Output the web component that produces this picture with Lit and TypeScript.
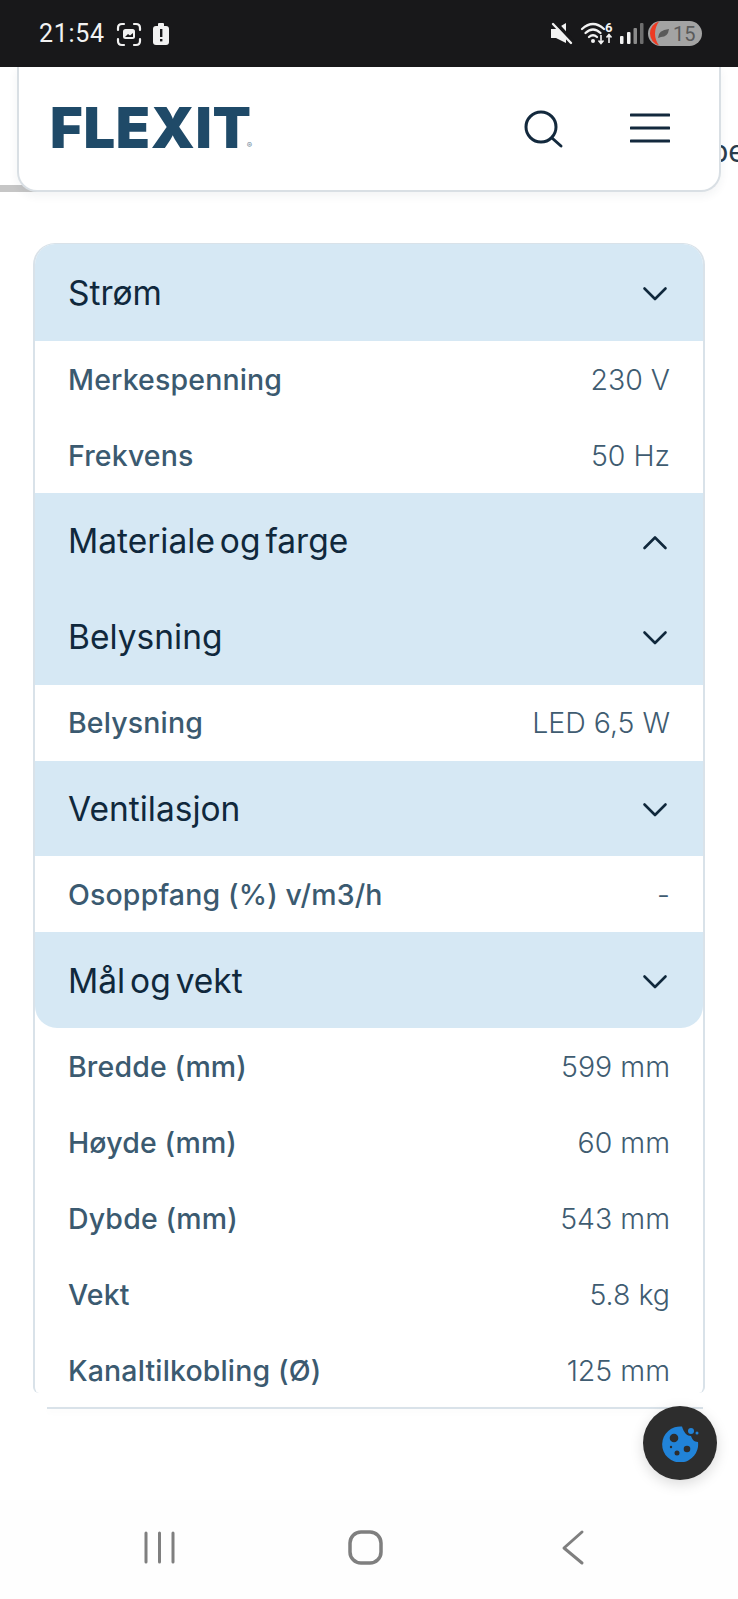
import { LitElement, css, html, svg } from "lit";
import { customElement } from "lit/decorators.js";

type Row = { label: string; value: string };
type Group = { title: string; open?: boolean; last?: boolean; rows: Row[] };

const groups: Group[] = [
  {
    title: "Strøm",
    rows: [
      { label: "Merkespenning", value: "230 V" },
      { label: "Frekvens", value: "50 Hz" },
    ],
  },
  { title: "Materiale og farge", open: true, rows: [] },
  { title: "Belysning", rows: [{ label: "Belysning", value: "LED 6,5 W" }] },
  { title: "Ventilasjon", rows: [{ label: "Osoppfang (%) v/m3/h", value: "-" }] },
  {
    title: "Mål og vekt",
    last: true,
    rows: [
      { label: "Bredde (mm)", value: "599 mm" },
      { label: "Høyde (mm)", value: "60 mm" },
      { label: "Dybde (mm)", value: "543 mm" },
      { label: "Vekt", value: "5.8 kg" },
      { label: "Kanaltilkobling (Ø)", value: "125 mm" },
    ],
  },
];

const chevron = (up?: boolean) => html`
  <svg class="chevron" viewBox="0 0 26 16" width="26" height="16">
    <path
      d=${up ? "M2.500 14L13 3.500L23.500 14" : "M2.500 2.500L13 13L23.500 2.500"}
      fill="none"
      stroke="#10283c"
      stroke-width="2.600"
      stroke-linecap="round"
      stroke-linejoin="round"
    />
  </svg>
`;

const statusLeft = svg`
  <g fill="none" stroke="#f2f2f2" stroke-width="2.200" stroke-linecap="round">
    <path d="M118 30V28Q118 24 122 24H124M134 24H136Q140 24 140 28V30M140 39V41Q140 45 136 45H134M124 45H122Q118 45 118 41V39" />
  </g>
  <rect x="123" y="29" width="12" height="10" rx="2.500" fill="#f2f2f2" />
  <path d="M125 37l3-3 2 1.500 3-2.500v4z" fill="#18181a" />
  <rect x="153" y="26" width="16" height="19" rx="3" fill="#f2f2f2" />
  <rect x="158" y="23" width="6" height="4" rx="1" fill="#f2f2f2" />
  <rect x="160" y="29" width="2.400" height="8" fill="#18181a" />
  <rect x="160" y="39" width="2.400" height="2.400" fill="#18181a" />
`;

const statusRight = svg`
  <path d="M551 29H556L566 23V43L556 38H551Z" fill="#f2f2f2" />
  <path d="M555 22L574 43" stroke="#18181a" stroke-width="4" />
  <path d="M553 24L571 43" stroke="#f2f2f2" stroke-width="2.400" stroke-linecap="round" />
  <g fill="none" stroke="#f2f2f2" stroke-width="2.300" stroke-linecap="round">
    <path d="M582 29Q593 19 604 29" />
    <path d="M585.500 33Q593 26 600.500 33" />
    <path d="M589 37Q593 33.500 597 37" />
  </g>
  <circle cx="593" cy="41" r="2" fill="#f2f2f2" />
  <text x="605" y="32" class="tiny">6</text>
  <path d="M601 35V43M598.500 40.500L601 43.500L603.500 40.500M609 43V35M606.500 37.500L609 34.500L611.500 37.500" fill="none" stroke="#f2f2f2" stroke-width="1.600" />
  <rect x="620" y="36" width="3.500" height="8" rx="1" fill="#f2f2f2" />
  <rect x="627" y="32" width="3.500" height="12" rx="1" fill="#f2f2f2" />
  <rect x="633.500" y="28" width="3.500" height="16" rx="1" fill="#8a8a8a" />
  <rect x="640" y="23" width="3.500" height="21" rx="1" fill="#6e6e6e" />
  <rect x="648" y="21" width="54" height="25" rx="12.500" fill="#a3a3a3" />
  <path d="M659 21.500A12.500 12.500 0 0 0 659 45.500Q655 40 655 33.500Q655 27 659 21.500Z" fill="#ee3b24" />
  <path d="M658 38Q658 30 669 29Q668 37 661 37Z" fill="#5a5a5a" />
  <text x="673" y="41" class="batt">15</text>
`;

@customElement("app-root")
export class AppRoot extends LitElement {
  static styles = css`
    :host {
      display: block;
      width: 738px;
      height: 1599px;
      position: relative;
      overflow: hidden;
      background: #ffffff;
      font-family: Inter, "Noto Sans", sans-serif;
      color: #10283c;
    }

    .status {
      height: 67px;
      background: #18181a;
      position: relative;
      display: flex;
      align-items: center;
      padding-left: 39px;
      box-sizing: border-box;
    }

    .clock {
      font: 400 25px Roboto, sans-serif;
      color: #f2f2f2;
      letter-spacing: 0.7px;
      margin-top: -1px;
    }

    .status-icons {
      position: absolute;
      left: 0;
      top: 0;
    }

    .tiny {
      font: 700 13px Roboto, sans-serif;
      fill: #f2f2f2;
    }

    .batt {
      font: 400 20px Roboto, sans-serif;
      fill: #5a5a5a;
    }

    .top {
      position: relative;
      height: 124px;
    }

    .progress {
      position: absolute;
      left: 0;
      top: 118px;
      width: 398px;
      height: 7px;
      background: #c6c6c6;
    }

    .peek {
      position: absolute;
      left: 710px;
      top: 67px;
      font-size: 30px;
      line-height: 34px;
      color: #2a3d4d;
    }

    .header {
      position: relative;
      margin-left: 17px;
      width: 704px;
      height: 125px;
      box-sizing: border-box;
      background: #ffffff;
      border: 2px solid #d9dfe4;
      border-top: 0;
      border-radius: 0 0 20px 20px;
      box-shadow: 0 4px 10px rgba(30, 50, 70, 0.06);
      display: flex;
      align-items: center;
      padding: 0 49px 0 32px;
    }

    .logo {
      font: 900 56px Inter, sans-serif;
      color: #1f4a68;
      line-height: 41px;
      letter-spacing: 0.7px;
      display: flex;
      align-items: flex-end;
      margin-left: -1px;
      margin-top: -1px;
    }

    .logo sup {
      font: 400 8px Inter, sans-serif;
      letter-spacing: 0;
      color: #6b8598;
      margin-left: -5px;
      margin-bottom: -1px;
    }

    .header-actions {
      margin-left: auto;
      display: flex;
      align-items: center;
      gap: 66px;
      margin-top: 2px;
    }

    .menu {
      margin-bottom: 3px;
    }

    .table {
      position: relative;
      margin: 52px 33px 0 33px;
      height: 1150px;
      box-sizing: border-box;
      border: 2px solid #d9e2e9;
      border-top: 1px solid #d9e2e9;
      border-bottom: 0;
      border-radius: 22px 22px 6px 6px;
      overflow: hidden;
    }

    .head {
      height: 95.75px;
      box-sizing: border-box;
      padding: 1px 35px 0 33px;
      background: #d6e8f4;
      display: flex;
      align-items: center;
      justify-content: space-between;
      font-size: 33.5px;
      font-weight: 400;
      word-spacing: -4.5px;
      color: #10283c;
    }

    .head.first {
      height: 97px;
    }

    .head.last {
      border-radius: 0 0 22px 22px;
    }

    .chevron {
      margin-top: 2px;
    }

    .row {
      height: 76px;
      box-sizing: border-box;
      padding: 0 33px;
      display: flex;
      align-items: center;
      justify-content: space-between;
    }

    .label {
      font-size: 28.5px;
      font-weight: 500;
      letter-spacing: 0.15px;
      color: #3b5a70;
    }

    .value {
      font-size: 28.5px;
      font-weight: 300;
      color: #3f5c71;
    }

    .table-end {
      position: absolute;
      left: 47px;
      top: 1407px;
      width: 656px;
      height: 2px;
      background: #d9e2e9;
      box-shadow: 0 3px 6px rgba(30, 50, 70, 0.04);
    }

    .cookie {
      position: absolute;
      left: 643px;
      top: 1406px;
      width: 74px;
      height: 74px;
      border-radius: 50%;
      background: #2d2d2d;
      box-shadow: 0 4px 14px rgba(0, 0, 0, 0.15);
      display: flex;
      align-items: center;
      justify-content: center;
    }

    .nav {
      position: absolute;
      left: 0;
      top: 1500px;
      width: 738px;
      height: 99px;
      background: #fefefe;
    }
  `;

  private renderGroup(group: Group, index: number) {
    return html`
      <div class="head ${index === 0 ? "first" : ""} ${group.last ? "last" : ""}">
        <span>${group.title}</span>
        ${chevron(group.open)}
      </div>
      ${group.rows.map(
        (row) => html`
          <div class="row">
            <span class="label">${row.label}</span>
            <span class="value">${row.value}</span>
          </div>
        `,
      )}
    `;
  }

  render() {
    return html`
      <div class="status">
        <span class="clock">21:54</span>
        <svg class="status-icons" width="738" height="67">${statusLeft}${statusRight}</svg>
      </div>

      <div class="top">
        <div class="progress"></div>
        <div class="peek">pe</div>
        <div class="header">
          <div class="logo">FLEXIT<sup>®</sup></div>
          <div class="header-actions">
            <svg width="40" height="40" viewBox="0 0 40 40">
              <circle cx="17" cy="17" r="15" fill="none" stroke="#13293d" stroke-width="3" />
              <path d="M28 28L37 36" stroke="#13293d" stroke-width="3" stroke-linecap="round" />
            </svg>
            <svg class="menu" width="40" height="30" viewBox="0 0 40 30">
              <path d="M1 2H39M1 15H39M1 28H39" stroke="#13293d" stroke-width="3" stroke-linecap="round" />
            </svg>
          </div>
        </div>
      </div>

      <div class="table">${groups.map((g, i) => this.renderGroup(g, i))}</div>
      <div class="table-end"></div>

      <div class="nav">
        <svg width="738" height="99" viewBox="0 0 738 99">
          <path d="M146 33V62M159.500 33V62M173 33V62" stroke="#7f7f7f" stroke-width="3" stroke-linecap="round" />
          <rect x="350" y="32" width="31" height="31" rx="11" fill="none" stroke="#7f7f7f" stroke-width="3.500" />
          <path d="M582 32L564 48L582 63" fill="none" stroke="#7f7f7f" stroke-width="3" stroke-linecap="round" stroke-linejoin="round" />
        </svg>
      </div>

      <div class="cookie">
        <svg width="38" height="38" viewBox="0 0 38 38">
          <path d="M21 2.500A18 18 0 1 0 37 18C33 18 31 15 30 12C26 12 23 9 21 2.500Z" fill="#2183d8" />
          <circle cx="13" cy="14" r="4.300" fill="#2d2d2d" />
          <circle cx="26" cy="25" r="3.300" fill="#2d2d2d" />
          <circle cx="16" cy="29" r="2.500" fill="#2d2d2d" />
          <circle cx="10" cy="23" r="1.200" fill="#2d2d2d" />
          <circle cx="30" cy="7" r="3" fill="#2183d8" />
          <circle cx="36" cy="9" r="1.500" fill="#2183d8" />
        </svg>
      </div>
    `;
  }
}
